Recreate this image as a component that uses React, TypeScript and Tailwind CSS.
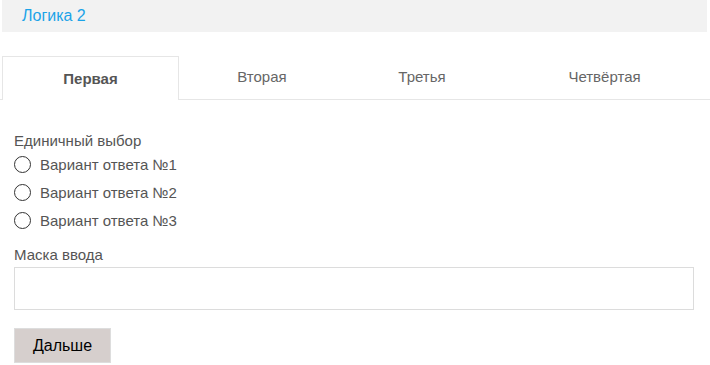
import { useState } from "react";

const tabs = [
  { label: "Первая", w: "w-[177px]" },
  { label: "Вторая", w: "w-[166px]" },
  { label: "Третья", w: "w-[154px]" },
  { label: "Четвёртая", w: "w-[211px]" },
];
const options = ["Вариант ответа №1", "Вариант ответа №2", "Вариант ответа №3"];

export default function App() {
  const [active, setActive] = useState(0);
  const [choice, setChoice] = useState<number | null>(null);

  return (
    <div className="w-[710px] h-[365px] bg-white font-['Liberation_Sans',Arial,sans-serif] text-[#555]">
      <div className="ml-[2px] mr-[3px] h-[32px] bg-[#f2f2f2] flex items-center pl-[20px]">
        <span className="text-[16px] text-[#1aa3e8]">Логика 2</span>
      </div>

      <div className="mt-[24px] pl-[2px] flex border-b border-[#e6e6e6]">
        {tabs.map((t, i) => (
          <button
            key={t.label}
            type="button"
            onClick={() => setActive(i)}
            className={`h-[44px] -mb-px text-[15px] ${t.w} ${
              active === i
                ? "border border-b-0 border-[#e6e6e6] bg-white font-bold text-[#555] pt-[2px]"
                : "text-[#666] pb-[2px]"
            }`}
          >
            {t.label}
          </button>
        ))}
      </div>

      <div className="px-[14px] pt-[32px]">
        <div className="text-[15px] leading-[17px]">Единичный выбор</div>
        <div className="mt-[7px] flex flex-col gap-[11px]">
          {options.map((o, i) => (
            <label key={o} className="flex items-center gap-[9px] cursor-pointer">
              <span
                className="w-[17px] h-[17px] rounded-full border-[1.5px] border-[#333] flex items-center justify-center"
                onClick={() => setChoice(i)}
              >
                {choice === i && <span className="w-[9px] h-[9px] rounded-full bg-[#333]" />}
              </span>
              <span className="text-[15px] leading-[17px] text-[#555]">{o}</span>
            </label>
          ))}
        </div>
        <div className="mt-[17px] text-[15px] leading-[17px]">Маска ввода</div>
        <input
          type="text"
          className="mt-[4px] block w-[680px] h-[43px] border border-[#dcdcdc] outline-none px-2"
        />
        <button
          type="button"
          className="mt-[18px] w-[97px] h-[35px] bg-[#d6cfcd] text-black text-[16px] border border-[#ddd]"
        >
          Дальше
        </button>
      </div>
    </div>
  );
}
